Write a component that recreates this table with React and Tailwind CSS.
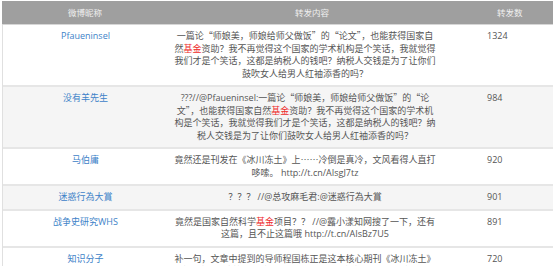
import React from 'react'

const ROWS = [
  {
    name: 'Pfaueninsel',
    count: '1324',
    lines: [
      '一篇论“师娘美，师娘给师父做饭”的“论文”，也能获得国家自',
      '然基金资助？我不再觉得这个国家的学术机构是个笑话，我就觉得',
      '我们才是个笑话，这都是纳税人的钱吧？纳税人交钱是为了让你们',
      '鼓吹女人给男人红袖添香的吗？',
    ],
  },
  {
    name: '没有羊先生',
    count: '984',
    shaded: true,
    lines: [
      '???//@Pfaueninsel:一篇论“师娘美，师娘给师父做饭”的“论',
      '文”，也能获得国家自然基金资助？我不再觉得这个国家的学术机',
      '构是个笑话，我就觉得我们才是个笑话，这都是纳税人的钱吧？纳',
      '税人交钱是为了让你们鼓吹女人给男人红袖添香的吗？',
    ],
  },
  {
    name: '马伯庸',
    count: '920',
    lines: [
      '竟然还是刊发在《冰川冻土》上……冷倒是真冷，文风看得人直打',
      '哆嗦。 http://t.cn/AIsgJ7tz',
    ],
  },
  {
    name: '迷惑行為大賞',
    count: '901',
    shaded: true,
    lines: ['？？？ //@总攻麻毛君:@迷惑行為大賞'],
  },
  {
    name: '战争史研究WHS',
    count: '891',
    lines: [
      '竟然是国家自然科学基金项目？？ //@露小漾知网搜了一下，还有',
      '这篇，且不止这篇哦 http://t.cn/AIsBz7U5',
    ],
  },
  {
    name: '知识分子',
    count: '720',
    lines: [
      '补一句，文章中提到的导师程国栋正是这本核心期刊《冰川冻土》',
      '的主编，而这篇论文的作者之一也是该刊的编委成员，值得深思',
    ],
  },
]

// ascii runs get the latin face, the rest stays on the CJK face
function Run({ text }) {
  const parts = text.split(/([\x00-\x7f]+)/)
  return parts.map((p, i) => {
    if (!p) return null
    if (/^[\x00-\x7f]+$/.test(p)) {
      return <span key={i} className="font-['Open_Sans',sans-serif]">{p}</span>
    }
    return <span key={i}>{p}</span>
  })
}

function Line({ text }) {
  const parts = text.split(/(基金)/)
  return (
    <div className="whitespace-nowrap">
      {parts.map((p, i) =>
        p === '基金' ? (
          <span key={i} className="text-[#ee2b2b]">{p}</span>
        ) : (
          <Run key={i} text={p} />
        )
      )}
    </div>
  )
}

export default function App() {
  return (
    <div className="w-[553px] h-[266px] overflow-hidden bg-white pt-px pl-[2px] font-['Noto_Sans_CJK_SC',sans-serif]">
      {/* Header */}
      <div className="grid grid-cols-[166px_284px_1fr] h-[24px] items-center bg-[#9f9f9f] text-[#f0f0f0] text-[8.5px] border-b border-[#d6d6d6]">
        <div className="text-center">微博昵称</div>
        <div className="text-center pl-[4px]">转发内容</div>
        <div className="pl-[45px]">转发数</div>
      </div>

      {/* Rows */}
      <div className="border-l border-[#e0e0e0]">
        {ROWS.map((row, i) => (
          <div
            key={row.name}
            className={`grid grid-cols-[165px_284px_1fr] py-[5px] min-h-[24px] text-[9px] leading-[12.5px] text-[#555] ${
              i > 0 ? 'border-t-2 border-[#e6e6e6]' : ''
            } ${row.shaded ? 'bg-[#f5f5f5]' : 'bg-white'}`}>
            <div className="text-center text-[#3d82c8]">
              <Run text={row.name} />
            </div>
            <div className="text-center pr-[10px]">
              {row.lines.map((l, j) => (
                <Line key={j} text={l} />
              ))}
            </div>
            <div className="pl-[35px] font-['Open_Sans',sans-serif]">{row.count}</div>
          </div>
        ))}
      </div>
    </div>
  )
}
